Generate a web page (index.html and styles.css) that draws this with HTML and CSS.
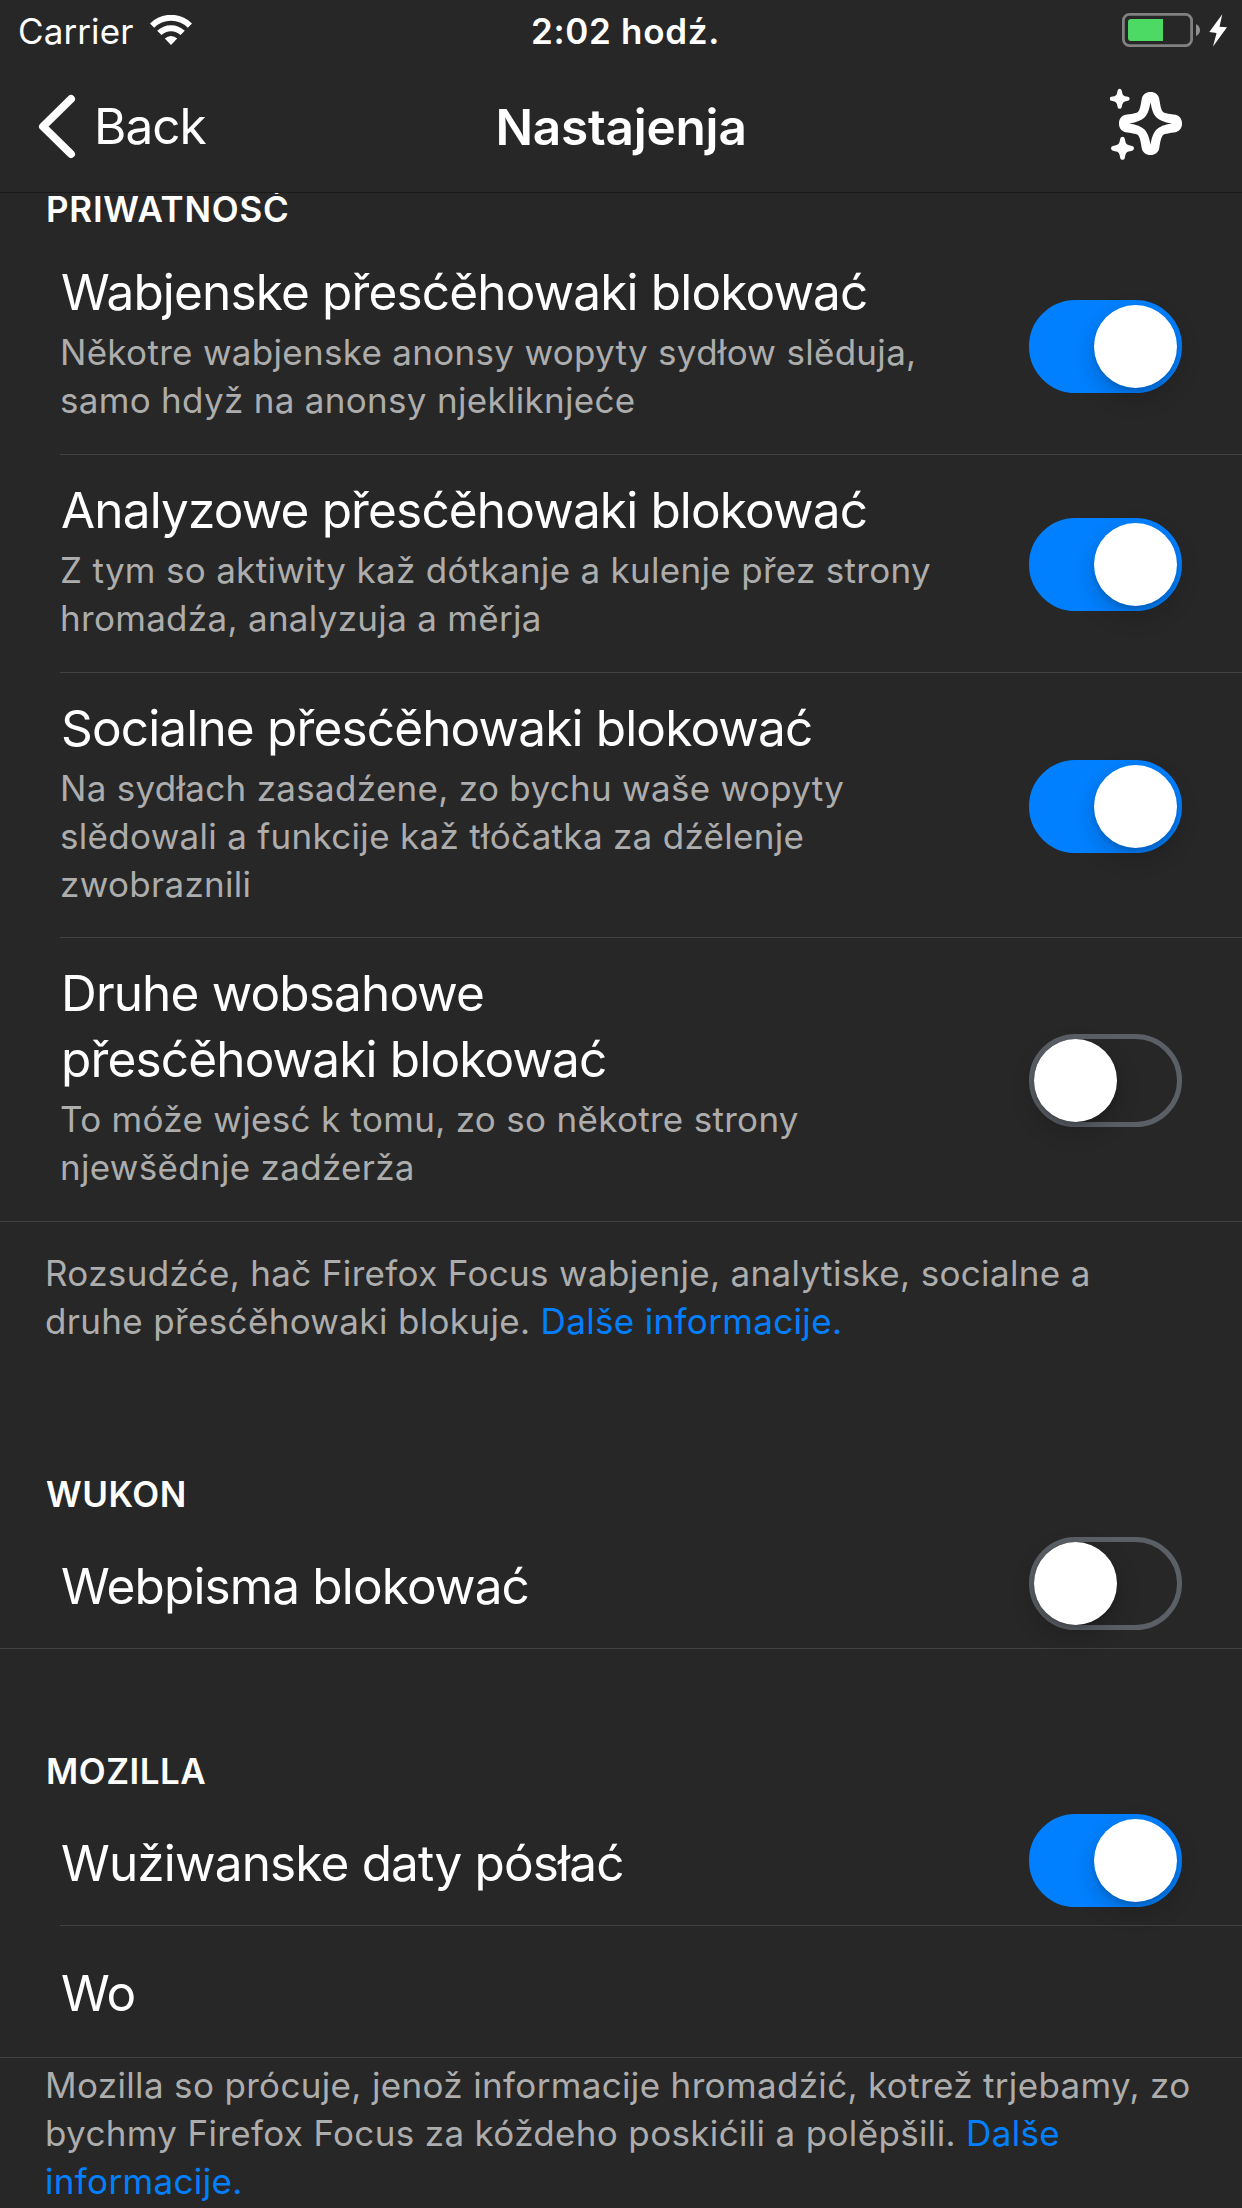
FILE: index.html
```
<!DOCTYPE html>
<html lang="hsb">
<head>
<meta charset="utf-8">
<title>Nastajenja</title>
<link rel="stylesheet" href="styles.css">
</head>
<body>
<header class="header">
  <div class="status">
    <div class="status-left">
      <span>Carrier</span>
      <svg class="wifi" viewBox="0 0 42 30" width="42" height="30">
        <path d="M2.05 10.65A26.8 26.8 0 0 1 39.95 10.65" fill="none" stroke="#fff" stroke-width="6"/>
        <path d="M9.35 17.95A16.5 16.5 0 0 1 32.65 17.95" fill="none" stroke="#fff" stroke-width="6"/>
        <path d="M21 30L14.8 23.6A8.8 8.8 0 0 1 27.2 23.6Z" fill="#fff"/>
      </svg>
    </div>
    <div class="clock">2:02 hodź.</div>
    <div class="status-right">
      <svg viewBox="0 0 108 36" width="108" height="36">
        <rect x="1.4" y="2.4" width="68.2" height="31.2" rx="6" fill="none" stroke="#818181" stroke-width="2.8"/>
        <path d="M9 7H41V29H9Q6 29 6 26V10Q6 7 9 7Z" fill="#4cd964"/>
        <path d="M74 12Q78 14 78 18T74 24Z" fill="#919191"/>
        <path d="M100.3 2.3L97.5 14.8L105 15.3L91 34.4L94.6 21L87.3 20Z" fill="#fff"/>
      </svg>
    </div>
  </div>
  <nav class="nav">
    <a class="back">
      <svg viewBox="0 0 38 76" width="38" height="76" overflow="visible">
        <path d="M35 11L6.4 38.5L35 66" transform="translate(0 0)" fill="none" stroke="#fff" stroke-width="0"/>
        <path d="M35 11L7 38.5L35 66" fill="none" stroke="#fff" stroke-width="8" stroke-linecap="round" stroke-linejoin="round"/>
      </svg>
      <span>Back</span>
    </a>
    <h1 class="nav-title">Nastajenja</h1>
    <svg class="sparkle" viewBox="0 0 240 270" width="80" height="90" fill="#fff">
      <path fill-rule="evenodd" transform="translate(121.5 130.5)" d="M0-94.5C14-94.5 23-87 26-75C29-60 30-44 37-35C44-29 60-29 75-26C87-23 94.5-14 94.5 0C94.5 14 87 23 75 26C60 29 44 29 37 35C30 44 29 60 26 75C23 87 14 94.5 0 94.5C-14 94.5-23 87-26 75C-29 60-30 44-37 35C-44 29-60 29-75 26C-87 23-94.5 14-94.5 0C-94.5-14-87-23-75-26C-60-29-44-29-37-35C-30-44-29-60-26-75C-23-87-14-94.5 0-94.5ZM0-64C-4-40-9-28-18-18C-28-9-40-4-64 0C-40 4-28 9-18 18C-9 28-4 40 0 64C4 40 9 28 18 18C28 9 40 4 64 0C40-4 28-9 18-18C9-28 4-40 0-64Z"/>
      <path transform="translate(29 56.5)" d="M0-30Q5-30 6-25Q8-13 11-11Q13-8 25-6Q30-5 30 0Q30 5 25 6Q13 8 11 11Q8 13 6 25Q5 30 0 30Q-5 30-6 25Q-8 13-11 11Q-13 8-25 6Q-30 5-30 0Q-30-5-25-6Q-13-8-11-11Q-8-13-6-25Q-5-30 0-30Z"/>
      <path transform="translate(37.5 205) scale(1.15)" d="M0-30Q5-30 6-25Q8-13 11-11Q13-8 25-6Q30-5 30 0Q30 5 25 6Q13 8 11 11Q8 13 6 25Q5 30 0 30Q-5 30-6 25Q-8 13-11 11Q-13 8-25 6Q-30 5-30 0Q-30-5-25-6Q-13-8-11-11Q-8-13-6-25Q-5-30 0-30Z"/>
    </svg>
  </nav>
</header>

<main class="content">
  <section class="section section-first">
    <h2 class="heading">PRIWATNOSĆ</h2>
    <div class="row row-inset">
      <div class="label">
        <div class="title">Wabjenske přesćěhowaki blokować</div>
        <div class="desc">Někotre wabjenske anonsy wopyty sydłow slěduja,<br>samo hdyž na anonsy njekliknjeće</div>
      </div>
      <div class="toggle on"><div class="thumb"></div></div>
    </div>
    <div class="row row-inset">
      <div class="label">
        <div class="title">Analyzowe přesćěhowaki blokować</div>
        <div class="desc">Z tym so aktiwity kaž dótkanje a kulenje přez strony<br>hromadźa, analyzuja a měrja</div>
      </div>
      <div class="toggle on"><div class="thumb"></div></div>
    </div>
    <div class="row row-inset row-long">
      <div class="label">
        <div class="title">Socialne přesćěhowaki blokować</div>
        <div class="desc">Na sydłach zasadźene, zo bychu waše wopyty<br>slědowali a funkcije kaž tłóčatka za dźělenje<br>zwobraznili</div>
      </div>
      <div class="toggle on"><div class="thumb"></div></div>
    </div>
    <div class="row">
      <div class="label">
        <div class="title">Druhe wobsahowe<br>přesćěhowaki blokować</div>
        <div class="desc">To móže wjesć k tomu, zo so někotre strony<br>njewšědnje zadźerža</div>
      </div>
      <div class="toggle"><div class="thumb"></div></div>
    </div>
    <p class="footnote footnote-roomy">Rozsudźće, hač Firefox Focus wabjenje, analytiske, socialne a<br>druhe přesćěhowaki blokuje. <a class="link">Dalše informacije.</a></p>
  </section>

  <section class="section section-performance">
    <h2 class="heading">WUKON</h2>
    <div class="row row-single">
      <div class="title">Webpisma blokować</div>
      <div class="toggle"><div class="thumb"></div></div>
    </div>
  </section>

  <section class="section section-mozilla">
    <h2 class="heading">MOZILLA</h2>
    <div class="row row-single row-inset">
      <div class="title">Wužiwanske daty pósłać</div>
      <div class="toggle on"><div class="thumb"></div></div>
    </div>
    <div class="row row-single row-about">
      <div class="title">Wo</div>
    </div>
    <p class="footnote">Mozilla so prócuje, jenož informacije hromadźić, kotrež trjebamy, zo<br>bychmy Firefox Focus za kóždeho poskićili a polěpšili. <a class="link">Dalše<br>informacije.</a></p>
  </section>
</main>
</body>
</html>
```
FILE: styles.css
```
* {
  box-sizing: border-box;
}

body {
  margin: 0;
  width: 1242px;
  height: 2208px;
  display: flex;
  flex-direction: column;
  overflow: hidden;
  background: #272727;
  color: #fff;
  font-family: Inter, "Liberation Sans", sans-serif;
  font-size: 35px;
}

h1, h2, p {
  margin: 0;
}

svg {
  display: block;
  flex: none;
}

.header {
  flex: none;
  height: 193px;
  border-bottom: 1px solid #1a1a1a;
}

/* Status bar */
.status {
  height: 60px;
  display: grid;
  grid-template-columns: 1fr auto 1fr;
  line-height: 62px;
}

.status-left {
  display: flex;
  gap: 16.5px;
  padding-left: 18px;
  letter-spacing: .1px;
}

.wifi {
  margin-top: 15px;
}

.clock {
  padding-left: 9px;
  font-weight: 600;
  letter-spacing: .7px;
}

.status-right {
  display: flex;
  justify-content: flex-end;
  padding: 12px 12px 0 0;
}

/* Navigation bar */
.nav {
  height: 132px;
  display: grid;
  grid-template-columns: 1fr auto 1fr;
  align-items: start;
  line-height: 132px;
  font-size: 49.5px;
}

.back {
  display: flex;
  padding-left: 36px;
  letter-spacing: -1px;
}

.back svg {
  margin-top: 28px;
}

.back span {
  margin-left: 20px;
}

.nav-title {
  padding-top: 1px;
  font-size: 49.5px;
  font-weight: 600;
  letter-spacing: -.2px;
}

.sparkle {
  justify-self: end;
  margin: 20px 52px 0 0;
}

/* Settings list */
.content {
  flex: 1;
  min-height: 0;
  overflow: hidden;
}

.section-first {
  margin-top: -5px;
}

.section-first .heading {
  letter-spacing: .75px;
}

.section-performance {
  padding-top: 128px;
}

.section-mozilla {
  padding-top: 101px;
}

.heading {
  height: 49px;
  padding-left: 46px;
  font-size: 35px;
  font-weight: 600;
  line-height: 42px;
  letter-spacing: .5px;
}

.row {
  display: flex;
  align-items: center;
  justify-content: space-between;
  padding: 22px 60px 30px;
  border-bottom: 1px solid #424242;
}

.row-inset {
  margin-left: 60px;
  padding-left: 0;
}

.row-long {
  padding-bottom: 29px;
}

.title {
  padding-left: 1px;
  font-size: 49.5px;
  line-height: 66px;
  letter-spacing: -.84px;
}

.desc {
  margin-top: 3px;
  color: #adadad;
  line-height: 48px;
  letter-spacing: .3px;
}

.row-single {
  height: 127px;
  padding-top: 2px;
  padding-bottom: 0;
}

.row-about {
  height: 132px;
}

.toggle {
  flex: none;
  width: 153px;
  height: 93px;
  margin-top: 10px;
  border: 5px solid #5b6067;
  border-radius: 47px;
  display: flex;
}

.row-single .toggle {
  margin-top: -5px;
}

.toggle.on {
  justify-content: flex-end;
  border-color: #0080ff;
  background: #0080ff;
}

.thumb {
  width: 83px;
  height: 83px;
  border-radius: 50%;
  background: #fff;
  box-shadow: 0 9px 24px rgba(0, 0, 0, .2), 0 3px 4px rgba(0, 0, 0, .12);
}

.footnote {
  padding: 3px 0 0 45px;
  color: #adadad;
  line-height: 48px;
  letter-spacing: .34px;
  white-space: nowrap;
}

.footnote-roomy {
  padding-top: 27px;
}

.link {
  color: #0080ff;
}
```
